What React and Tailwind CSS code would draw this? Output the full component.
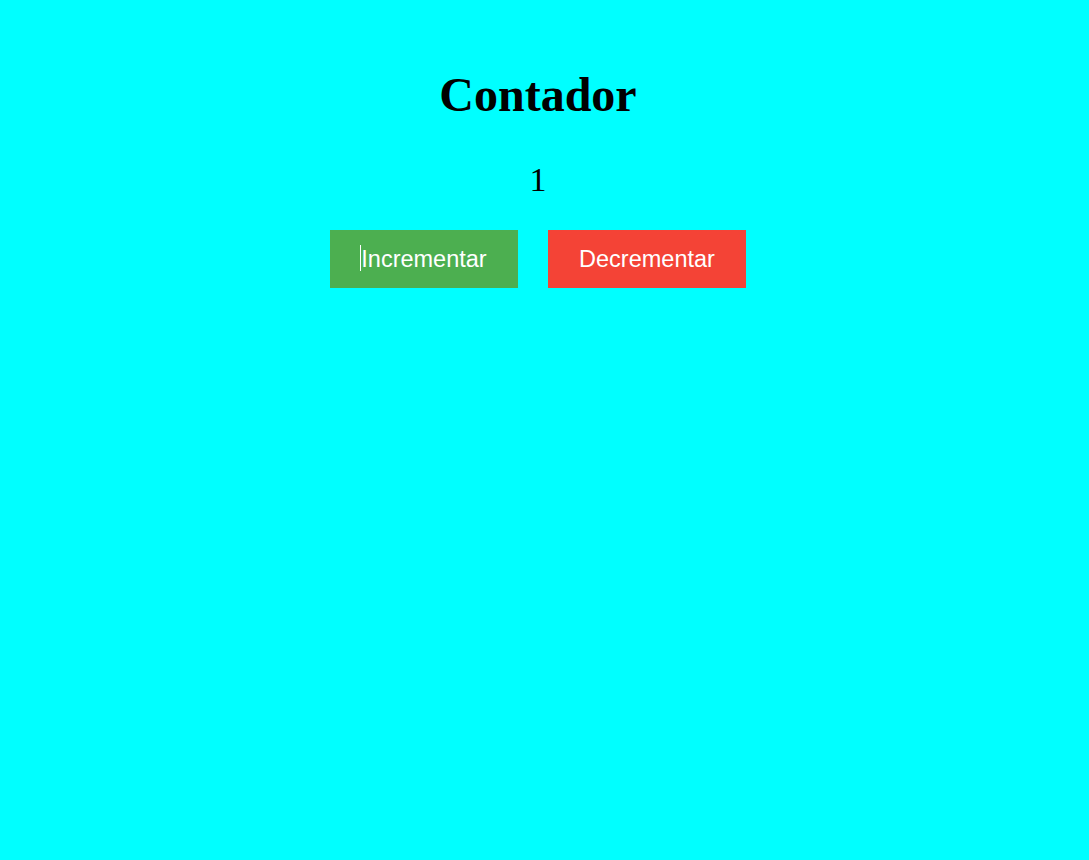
export default function App() {
  return (
    <div className="min-h-screen w-full bg-[#00ffff]">
      <div className="w-[1076px] pt-[67px] flex flex-col items-center">
        <h1 className="text-[48px] leading-[55px] font-bold text-black font-['Liberation_Serif','Times_New_Roman',serif] mb-[38px]">
          Contador
        </h1>
        <p className="text-[34px] leading-[39px] text-black font-['Liberation_Serif','Times_New_Roman',serif] mb-[31px]">
          1
        </p>
        <div className="flex flex-row gap-[30px]">
          <button className="relative w-[188px] py-[16px] bg-[#4caf50] text-white text-[23.5px] leading-[26px] text-center font-['Liberation_Sans',Arial,sans-serif]">
            <span className="absolute left-[30px] top-[15px] w-px h-[26px] bg-white"></span>
            Incrementar
          </button>
          <button className="w-[198px] py-[16px] bg-[#f44336] text-white text-[23.5px] leading-[26px] text-center font-['Liberation_Sans',Arial,sans-serif]">
            Decrementar
          </button>
        </div>
      </div>
    </div>
  );
}
